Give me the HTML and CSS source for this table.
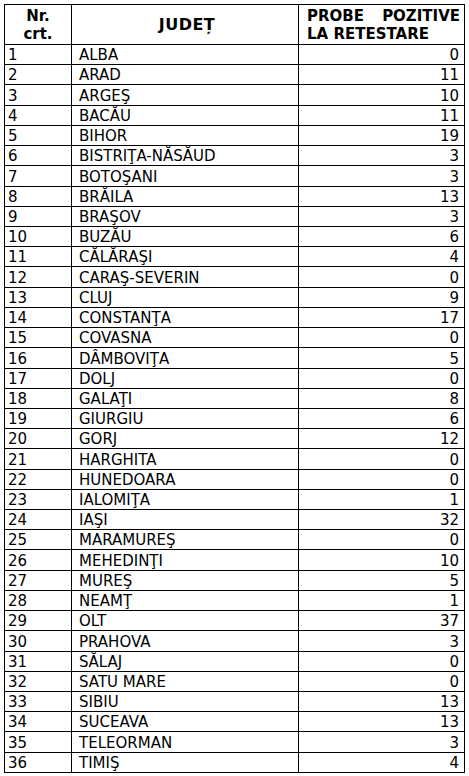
FILE: index.html
```html
<!DOCTYPE html>
<html lang="ro">
<head>
<meta charset="utf-8">
<link rel="stylesheet" href="styles.css">
</head>
<body>
<table class="grid">
<colgroup><col class="c1"><col class="c2"><col class="c3"></colgroup>
<thead>
<tr class="head">
<th class="h-nr"><span class="hl">Nr.</span><span class="hl">crt.</span></th>
<th class="h-jud">JUDEȚ</th>
<th class="h-probe"><span class="line1"><span>PROBE</span><span>POZITIVE</span></span><span class="hl">LA RETESTARE</span></th>
</tr>
</thead>
<tbody>
<tr><td>1</td><td>ALBA</td><td class="num">0</td></tr>
<tr><td>2</td><td>ARAD</td><td class="num">11</td></tr>
<tr><td>3</td><td>ARGEŞ</td><td class="num">10</td></tr>
<tr><td>4</td><td>BACĂU</td><td class="num">11</td></tr>
<tr><td>5</td><td>BIHOR</td><td class="num">19</td></tr>
<tr><td>6</td><td>BISTRIŢA-NĂSĂUD</td><td class="num">3</td></tr>
<tr><td>7</td><td>BOTOŞANI</td><td class="num">3</td></tr>
<tr><td>8</td><td>BRĂILA</td><td class="num">13</td></tr>
<tr><td>9</td><td>BRAŞOV</td><td class="num">3</td></tr>
<tr><td>10</td><td>BUZĂU</td><td class="num">6</td></tr>
<tr><td>11</td><td>CĂLĂRAŞI</td><td class="num">4</td></tr>
<tr><td>12</td><td>CARAŞ-SEVERIN</td><td class="num">0</td></tr>
<tr><td>13</td><td>CLUJ</td><td class="num">9</td></tr>
<tr><td>14</td><td>CONSTANŢA</td><td class="num">17</td></tr>
<tr><td>15</td><td>COVASNA</td><td class="num">0</td></tr>
<tr><td>16</td><td>DÂMBOVIŢA</td><td class="num">5</td></tr>
<tr><td>17</td><td>DOLJ</td><td class="num">0</td></tr>
<tr><td>18</td><td>GALAŢI</td><td class="num">8</td></tr>
<tr><td>19</td><td>GIURGIU</td><td class="num">6</td></tr>
<tr><td>20</td><td>GORJ</td><td class="num">12</td></tr>
<tr><td>21</td><td>HARGHITA</td><td class="num">0</td></tr>
<tr><td>22</td><td>HUNEDOARA</td><td class="num">0</td></tr>
<tr><td>23</td><td>IALOMIŢA</td><td class="num">1</td></tr>
<tr><td>24</td><td>IAŞI</td><td class="num">32</td></tr>
<tr><td>25</td><td>MARAMUREŞ</td><td class="num">0</td></tr>
<tr><td>26</td><td>MEHEDINŢI</td><td class="num">10</td></tr>
<tr><td>27</td><td>MUREŞ</td><td class="num">5</td></tr>
<tr><td>28</td><td>NEAMŢ</td><td class="num">1</td></tr>
<tr><td>29</td><td>OLT</td><td class="num">37</td></tr>
<tr><td>30</td><td>PRAHOVA</td><td class="num">3</td></tr>
<tr><td>31</td><td>SĂLAJ</td><td class="num">0</td></tr>
<tr><td>32</td><td>SATU MARE</td><td class="num">0</td></tr>
<tr><td>33</td><td>SIBIU</td><td class="num">13</td></tr>
<tr><td>34</td><td>SUCEAVA</td><td class="num">13</td></tr>
<tr><td>35</td><td>TELEORMAN</td><td class="num">3</td></tr>
<tr><td>36</td><td>TIMIŞ</td><td class="num">4</td></tr>
</tbody>
</table>
</body>
</html>
```
FILE: styles.css
```css
html, body {
  margin: 0;
  padding: 0;
  background: #ffffff;
}
body {
  padding: 4px 0 0 4px;
}
.grid {
  border-collapse: collapse;
  table-layout: fixed;
  width: 460px;
  font-family: "DejaVu Sans", sans-serif;
  font-size: 15px;
  color: #000;
}
.c1 { width: 67px; }
.c2 { width: 227px; }
.c3 { width: 166px; }
.grid th, .grid td {
  border: 1px solid #000;
  padding: 0;
  line-height: 16px;
}
.head { height: 40px; }
.grid th {
  font-family: "DejaVu Sans", sans-serif;
  font-weight: bold;
  font-size: 15px;
  line-height: 18px;
  vertical-align: middle;
}
.grid th.h-nr { text-align: center; }
.grid th.h-jud {
  text-align: center;
  font-size: 16px;
  letter-spacing: 0.5px;
  padding-left: 4px;
}
.grid th.h-probe {
  text-align: left;
  padding: 0 4px 0 8px;
}
.hl {
  display: block;
}
.line1 {
  display: flex;
  justify-content: space-between;
}
.grid tbody tr { height: 20.22px; }
.grid td {
  vertical-align: bottom;
  padding: 0 5px 1px 3px;
  white-space: nowrap;
}
.grid td:nth-child(2) { padding-left: 7px; }
.grid td.num { text-align: right; }
```
